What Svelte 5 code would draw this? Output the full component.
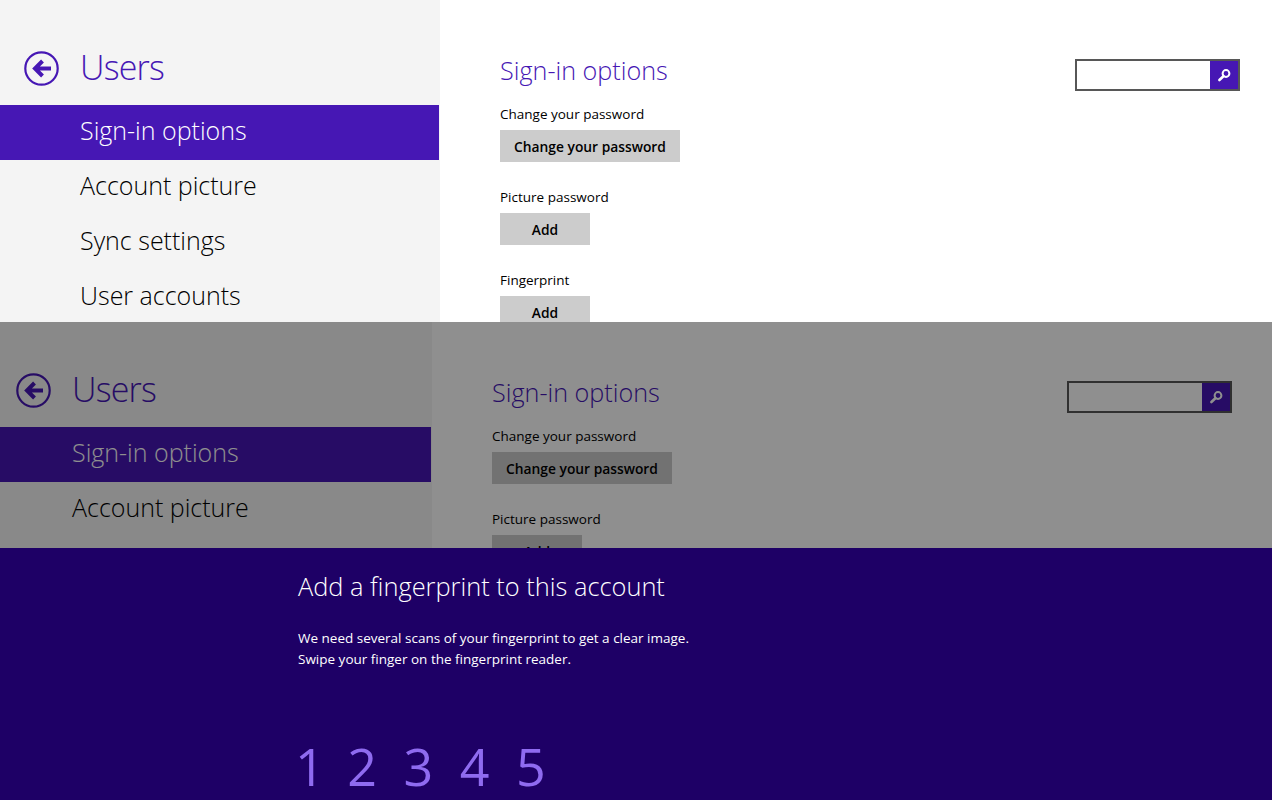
<script>
  const menu = ['Sign-in options', 'Account picture', 'Sync settings', 'User accounts'];
  const sections = [
    { label: 'Change your password', action: 'Change your password', wide: true },
    { label: 'Picture password', action: 'Add' },
    { label: 'Fingerprint', action: 'Add' }
  ];
  const steps = [1, 2, 3, 4, 5];
</script>

{#snippet page()}
  <div class="page">
    <aside class="side">
      <header class="side-head">
        <svg class="back" width="35" height="35" viewBox="0 0 35 35" aria-hidden="true">
          <circle cx="17.5" cy="17.5" r="16.2" fill="none" stroke="currentColor" stroke-width="2.2" />
          <path d="M27 17.5 H12 M18.5 10 L11 17.5 L18.5 25" fill="none" stroke="currentColor" stroke-width="4" />
        </svg>
        <h1>Users</h1>
      </header>
      <nav>
        {#each menu as item, i}
          <div class="item" class:active={i === 0}>{item}</div>
        {/each}
      </nav>
    </aside>
    <main class="main">
      <div class="content">
        <h2>Sign-in options</h2>
        {#each sections as s}
          <div class="section">
            <div class="label">{s.label}</div>
            <button class="btn" class:wide={s.wide}>{s.action}</button>
          </div>
        {/each}
      </div>
      <div class="search">
        <span class="search-input"></span>
        <span class="search-btn">
          <svg width="14" height="14" viewBox="0 0 14 14" aria-hidden="true">
            <circle cx="9" cy="5.5" r="3.4" fill="none" stroke="#fff" stroke-width="2" />
            <path d="M6.4 8.2 L2.4 12" stroke="#fff" stroke-width="2.6" stroke-linecap="round" />
          </svg>
        </span>
      </div>
    </main>
  </div>
{/snippet}

<div class="top">
  {@render page()}
</div>

<div class="dimmed">
  {@render page()}
  <div class="shade"></div>
</div>

<section class="dialog">
  <h3>Add a fingerprint to this account</h3>
  <p>We need several scans of your fingerprint to get a clear image.<br />Swipe your finger on the fingerprint reader.</p>
  <div class="steps">
    {#each steps as n}
      <span>{n}</span>
    {/each}
  </div>
</section>

<style>
  :global(body) {
    margin: 0;
    background: #fff;
    font-family: "Open Sans", "Noto Sans", sans-serif;
    color: #000;
  }
  .top {
    height: 322px;
    overflow: hidden;
  }
  .dimmed {
    position: relative;
    width: 1272px;
    height: 226px;
    overflow: hidden;
  }
  .dimmed .page {
    margin-left: -8px;
  }
  .shade {
    position: absolute;
    inset: 0;
    background: rgba(0, 0, 0, 0.44);
  }
  .page {
    display: flex;
    width: 1280px;
  }
  .side {
    flex: 0 0 440px;
    height: 400px;
    background: #f4f4f4;
  }
  .side-head {
    display: flex;
    align-items: center;
    gap: 21px;
    height: 105px;
    box-sizing: border-box;
    padding: 31px 0 0 24px;
    color: #4617b4;
  }
  .side-head h1 {
    margin: 0 0 3px;
    font-size: 34px;
    font-weight: 300;
    letter-spacing: -0.8px;
    line-height: 48px;
  }
  .item {
    height: 55px;
    margin-right: 1px;
    padding-left: 80px;
    font-size: 25px;
    font-weight: 300;
    line-height: 50px;
  }
  .item.active {
    background: #4617b4;
    color: #fff;
  }
  .main {
    flex: 1;
    display: flex;
    justify-content: space-between;
    padding: 0 40px 0 60px;
  }
  h2 {
    margin: 0;
    padding-top: 52px;
    font-size: 25.2px;
    font-weight: 300;
    line-height: 36px;
    color: #4617b4;
  }
  .section {
    margin-top: 17px;
    height: 66px;
  }
  .label {
    font-size: 13.5px;
    line-height: 19px;
  }
  .btn {
    display: block;
    margin-top: 6px;
    width: 90px;
    height: 32px;
    padding: 0;
    border: 0;
    background: #ccc;
    color: #000;
    font: 600 13.8px "Open Sans", "Noto Sans", sans-serif;
  }
  .btn.wide {
    width: 180px;
  }
  .search {
    display: flex;
    width: 165px;
    height: 32px;
    margin-top: 59px;
    box-sizing: border-box;
    border: 2px solid #575757;
  }
  .search-input {
    flex: 1;
    background: #fff;
  }
  .search-btn {
    width: 28px;
    background: #4617b4;
    display: flex;
    align-items: center;
    justify-content: center;
  }
  .dialog {
    width: 1272px;
    height: 252px;
    box-sizing: border-box;
    padding: 19px 0 0 298px;
    background: #1e0066;
    color: #fff;
  }
  h3 {
    margin: 0;
    font-size: 25.4px;
    font-weight: 300;
    line-height: 38px;
  }
  p {
    margin: 23px 0 0;
    font-size: 13.5px;
    line-height: 21px;
  }
  .steps {
    display: flex;
    gap: 26.5px;
    margin: 61px 0 0 -3px;
    color: #8f6bf0;
    font-size: 52px;
    font-weight: 400;
    line-height: 70px;
  }
  .steps span:first-child {
    margin-right: -4px;
  }
</style>
